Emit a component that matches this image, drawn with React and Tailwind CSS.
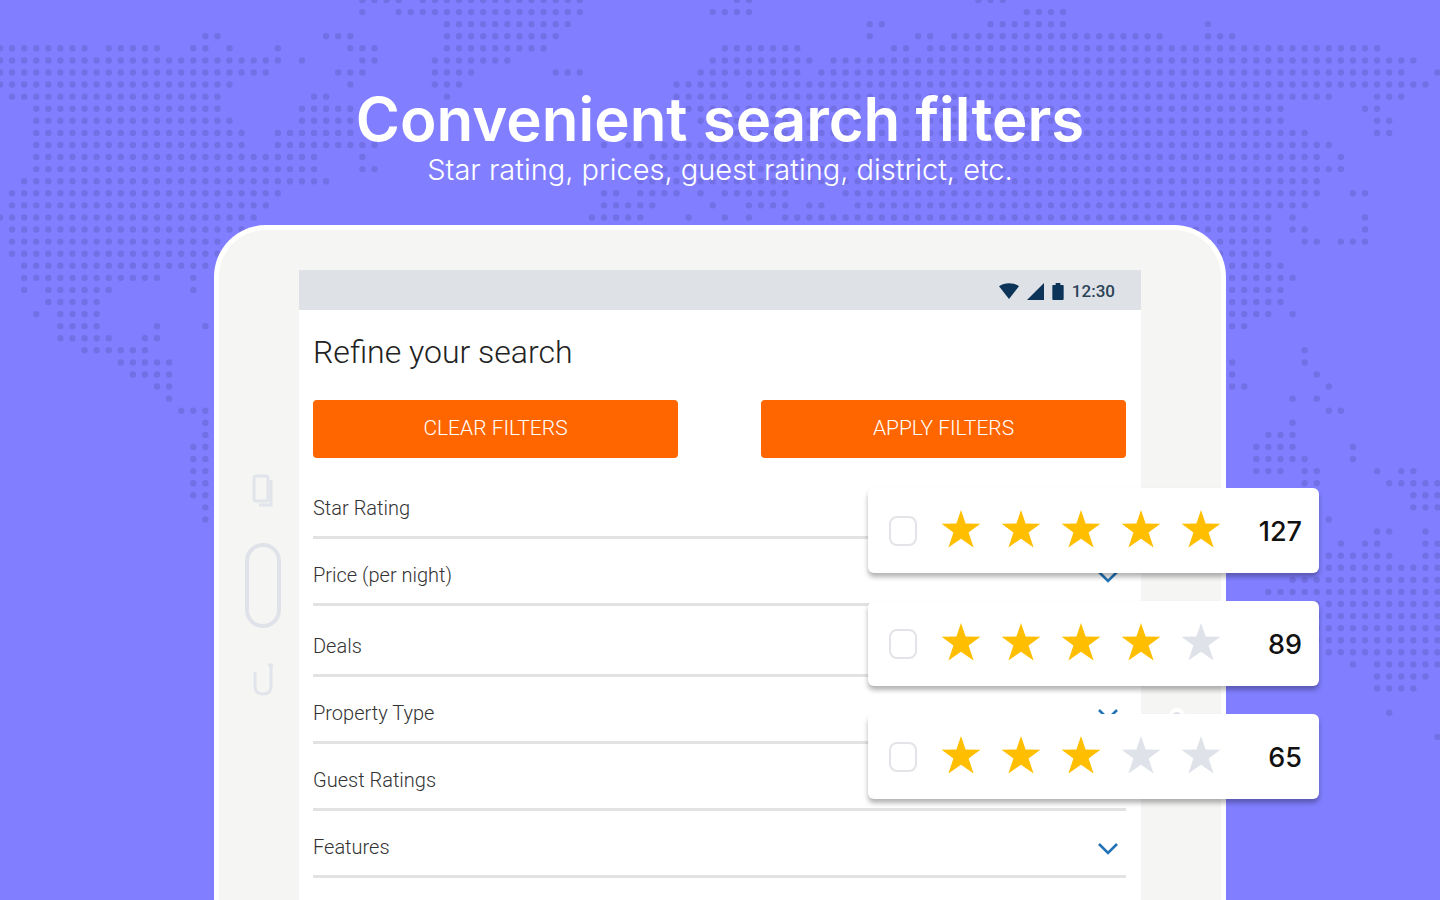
import React from 'react';

const DOT_PITCH = 12.08;

// Dotted world map, one entry per row: [row, [first column, last column], ...]
const MAP_ROWS = [
  [0, [30, 33], [35, 48], [61, 62], [81, 83]],
  [1, [30, 30], [33, 48], [59, 62], [85, 88]],
  [2, [37, 47], [72, 73], [82, 88], [100, 100]],
  [3, [17, 18], [27, 29], [37, 46], [72, 72], [76, 77], [79, 96], [100, 102]],
  [4, [0, 7], [9, 13], [16, 17], [19, 19], [23, 23], [29, 31], [37, 45], [60, 66], [74, 75], [77, 114]],
  [5, [0, 23], [25, 25], [30, 31], [36, 42], [59, 67], [69, 117]],
  [6, [0, 22], [28, 30], [36, 39], [46, 48], [58, 66], [68, 116], [119, 119]],
  [7, [0, 19], [29, 29], [36, 38], [56, 60], [62, 118]],
  [8, [1, 18], [26, 27], [37, 37], [56, 60], [62, 110], [114, 116]],
  [9, [3, 18], [25, 29], [57, 106], [113, 114]],
  [10, [3, 19], [25, 29], [58, 106], [114, 115]],
  [11, [3, 20], [23, 29], [59, 108], [114, 115]],
  [12, [3, 20], [23, 31], [50, 50], [52, 53], [55, 110]],
  [13, [3, 26], [30, 30], [54, 109], [111, 111]],
  [14, [3, 26], [30, 31], [55, 111]],
  [15, [2, 27], [53, 109]],
  [16, [1, 23], [50, 51], [53, 56], [58, 58], [60, 65], [70, 109], [112, 113]],
  [17, [1, 22], [50, 54], [59, 59], [62, 65], [67, 68], [71, 108]],
  [18, [0, 21], [49, 53], [57, 57], [60, 60], [62, 62], [65, 105], [107, 107], [113, 113]],
  [19, [1, 20], [98, 105], [107, 108], [113, 113]],
  [20, [1, 18], [100, 105], [108, 109], [111, 113]],
  [21, [1, 18], [101, 105]],
  [22, [2, 17], [102, 106]],
  [23, [2, 13], [16, 16], [102, 107]],
  [24, [2, 2], [4, 9], [16, 16], [102, 106]],
  [25, [4, 8], [102, 106]],
  [26, [3, 3], [5, 8], [102, 105], [107, 107]],
  [27, [5, 8], [13, 13], [17, 17], [102, 103]],
  [28, [5, 9], [12, 13]],
  [29, [7, 12], [108, 108]],
  [30, [10, 14], [102, 102], [108, 108]],
  [31, [11, 14], [102, 102], [109, 109]],
  [32, [13, 14], [102, 103], [110, 110]],
  [33, [14, 14], [107, 107], [109, 109]],
  [34, [15, 17], [110, 111]],
  [35, [17, 17], [107, 107]],
  [36, [17, 17], [105, 107]],
  [37, [16, 17], [104, 107], [112, 112]],
  [38, [16, 17], [104, 108], [112, 112]],
  [39, [16, 17], [104, 106], [108, 109], [114, 114], [116, 117]],
  [40, [16, 17], [108, 109], [115, 119]],
  [41, [16, 17], [117, 119]],
  [42, [17, 17], [117, 119]],
  [43, [17, 17], [110, 110]],
  [44, [114, 115], [118, 118]],
  [45, [111, 111], [113, 114], [118, 119]],
  [46, [110, 115], [118, 119]],
  [47, [110, 119]],
  [48, [107, 119]],
  [49, [105, 119]],
  [50, [109, 119]],
  [51, [109, 119]],
  [52, [109, 119]],
  [53, [109, 119]],
  [54, [110, 119]],
  [55, [112, 112], [114, 119]],
  [56, [114, 118]],
  [57, [114, 117]],
  [59, [115, 115]],
  [61, [119, 119]],
];

const FILTER_GROUPS = [
  ['Star Rating', 'Price (per night)'],
  ['Deals', 'Property Type', 'Guest Ratings', 'Features'],
];

const STAR_OPTIONS = [
  { stars: 5, count: 127 },
  { stars: 4, count: 89 },
  { stars: 3, count: 65 },
];

const WorldMap = () => (
  <svg
    className="absolute inset-0 h-full w-full"
    viewBox="0 0 1440 900"
    preserveAspectRatio="xMidYMin slice"
    aria-hidden="true"
  >
    {MAP_ROWS.map(([row, ...ranges]) =>
      ranges.map(([from, to]) => (
        <line
          key={`${row}-${from}`}
          x1={from * DOT_PITCH}
          x2={to * DOT_PITCH + 0.01}
          y1={row * DOT_PITCH}
          y2={row * DOT_PITCH}
          stroke="#7370e6"
          strokeWidth="6.4"
          strokeLinecap="round"
          strokeDasharray={`0 ${DOT_PITCH}`}
        />
      ))
    )}
  </svg>
);

const Star = ({ filled }) => (
  <svg viewBox="0 0 40 38" className={filled ? 'h-[38px] w-10 text-[#ffbf00]' : 'h-[38px] w-10 text-[#dfe2e9]'} aria-hidden="true">
    <path
      fill="currentColor"
      d="M20 0 L24.6 13.6 L39.4 13.8 L27.6 22.6 L32.6 37.4 L20 28.8 L7.4 37.4 L12.4 22.6 L0.6 13.8 L15.4 13.6 Z"
    />
  </svg>
);

const Chevron = () => (
  <svg viewBox="0 0 20 12" className="mt-1 h-3 w-5" fill="none" stroke="#2273b5" strokeWidth="2.6" aria-hidden="true">
    <path d="M1 1 L10 10 L19 1" />
  </svg>
);

const StatusBar = () => (
  <div className="flex h-10 items-center justify-end gap-2 bg-[#dee2e7] pr-[26px] pt-[2px] text-[#0c3358]">
    <svg viewBox="0 0 20 16" className="h-4 w-5" fill="currentColor" aria-hidden="true">
      <path d="M0 3.2 C5.5 -0.8 14.5 -0.8 20 3.2 L10 16 Z" />
    </svg>
    <svg viewBox="0 0 18 18" className="h-[17px] w-[17px]" fill="currentColor" aria-hidden="true">
      <path d="M18 0 V18 H0 Z" />
    </svg>
    <svg viewBox="0 0 12 18" className="h-[17px] w-3" fill="currentColor" aria-hidden="true">
      <path d="M3.5 0 H8.5 V2 H11 Q12 2 12 3 V17 Q12 18 11 18 H1 Q0 18 0 17 V3 Q0 2 1 2 H3.5 Z" />
    </svg>
    <span className="text-[17px] leading-none font-medium text-[#2b4257]">12:30</span>
  </div>
);

const StarOption = ({ stars, count }) => (
  <label className="flex h-[85px] items-center rounded-md bg-white pr-[17px] pl-[21px] shadow-[0_4px_5px_rgba(0,0,0,0.3)]">
    <input
      type="checkbox"
      aria-label={`${stars} stars`}
      className="h-[30px] w-7 appearance-none rounded-lg border-2 border-[#e2e4e8] bg-white"
    />
    <span className="ml-6 flex gap-5 pb-1">
      {[1, 2, 3, 4, 5].map((n) => (
        <Star key={n} filled={n <= stars} />
      ))}
    </span>
    <span className="ml-auto pt-1 text-[27px] font-medium text-[#111]">{count}</span>
  </label>
);

const App = () => {
  return (
    <main className="relative flex min-h-screen flex-col overflow-hidden bg-[#817fff] font-[Inter,sans-serif]">
      <WorldMap />

      <header className="relative pt-[84px] text-center text-white">
        <h1 className="text-[60px] leading-[70px] font-semibold">Convenient search filters</h1>
        <p className="text-[29px] leading-8 font-light">Star rating, prices, guest rating, district, etc.</p>
      </header>

      {/* Tablet */}
      <section className="relative mx-auto mt-[39px] flex w-full max-w-[1012px] flex-1 rounded-t-[52px] border-x-[5px] border-t-[5px] border-white bg-[#f5f5f3] pt-10">
        <div className="flex w-20 flex-col items-center pt-[204px] pl-2">
          <svg viewBox="0 0 22 34" className="h-[34px] w-[22px]" fill="none" stroke="#e1e4ea" strokeWidth="3" aria-hidden="true">
            <rect x="2" y="2" width="14" height="25" rx="2" />
            <path d="M19 6 V31 H7" />
          </svg>
          <button type="button" aria-label="Home" className="mt-[35px] h-[85px] w-9 rounded-full border-4 border-[#dfe2e9]" />
          <svg viewBox="0 0 22 36" className="mt-[33px] h-9 w-[22px]" fill="none" stroke="#e1e4ea" strokeWidth="3" aria-hidden="true">
            <path d="M3 11 V25 Q3 33 11 33 Q19 33 19 25 V3" />
            <path d="M16 4 H21" />
          </svg>
        </div>

        <div className="min-w-0 flex-1 bg-white font-[Roboto,sans-serif]">
          <StatusBar />
          <div className="pr-[15px] pl-[14px]">
            <h2 className="mt-5 text-[32px] leading-[44px] font-light text-[#222]">Refine your search</h2>
            <div className="mt-[26px] flex justify-between gap-4">
              <button type="button" className="h-[58px] w-[365px] rounded-sm bg-[#ff6600] text-[21px] font-light text-white">
                CLEAR FILTERS
              </button>
              <button type="button" className="h-[58px] w-[365px] rounded-sm bg-[#ff6600] text-[21px] font-light text-white">
                APPLY FILTERS
              </button>
            </div>
            <div className="mt-[14px] flex flex-col gap-1">
              {FILTER_GROUPS.map((group) => (
                <ul key={group[0]}>
                  {group.map((name) => (
                    <li key={name}>
                      <button
                        type="button"
                        className="flex h-[67px] w-full items-center justify-between border-b-3 border-[#e2e2e2] pt-2 pr-2 text-left text-xl font-light text-[#333]"
                      >
                        {name}
                        <Chevron />
                      </button>
                    </li>
                  ))}
                </ul>
              ))}
            </div>
          </div>
        </div>

        <div className="flex w-20 flex-col items-center pt-[438px] pr-2">
          <span className="h-4 w-4 rounded-full border-4 border-white bg-[#dfe2e9]" />
        </div>

        {/* Floating star filter options */}
        <div className="absolute top-[258px] -right-[98px] flex w-[451px] flex-col gap-7">
          {STAR_OPTIONS.map((option) => (
            <StarOption key={option.stars} {...option} />
          ))}
        </div>
      </section>
    </main>
  );
};

export default App;
